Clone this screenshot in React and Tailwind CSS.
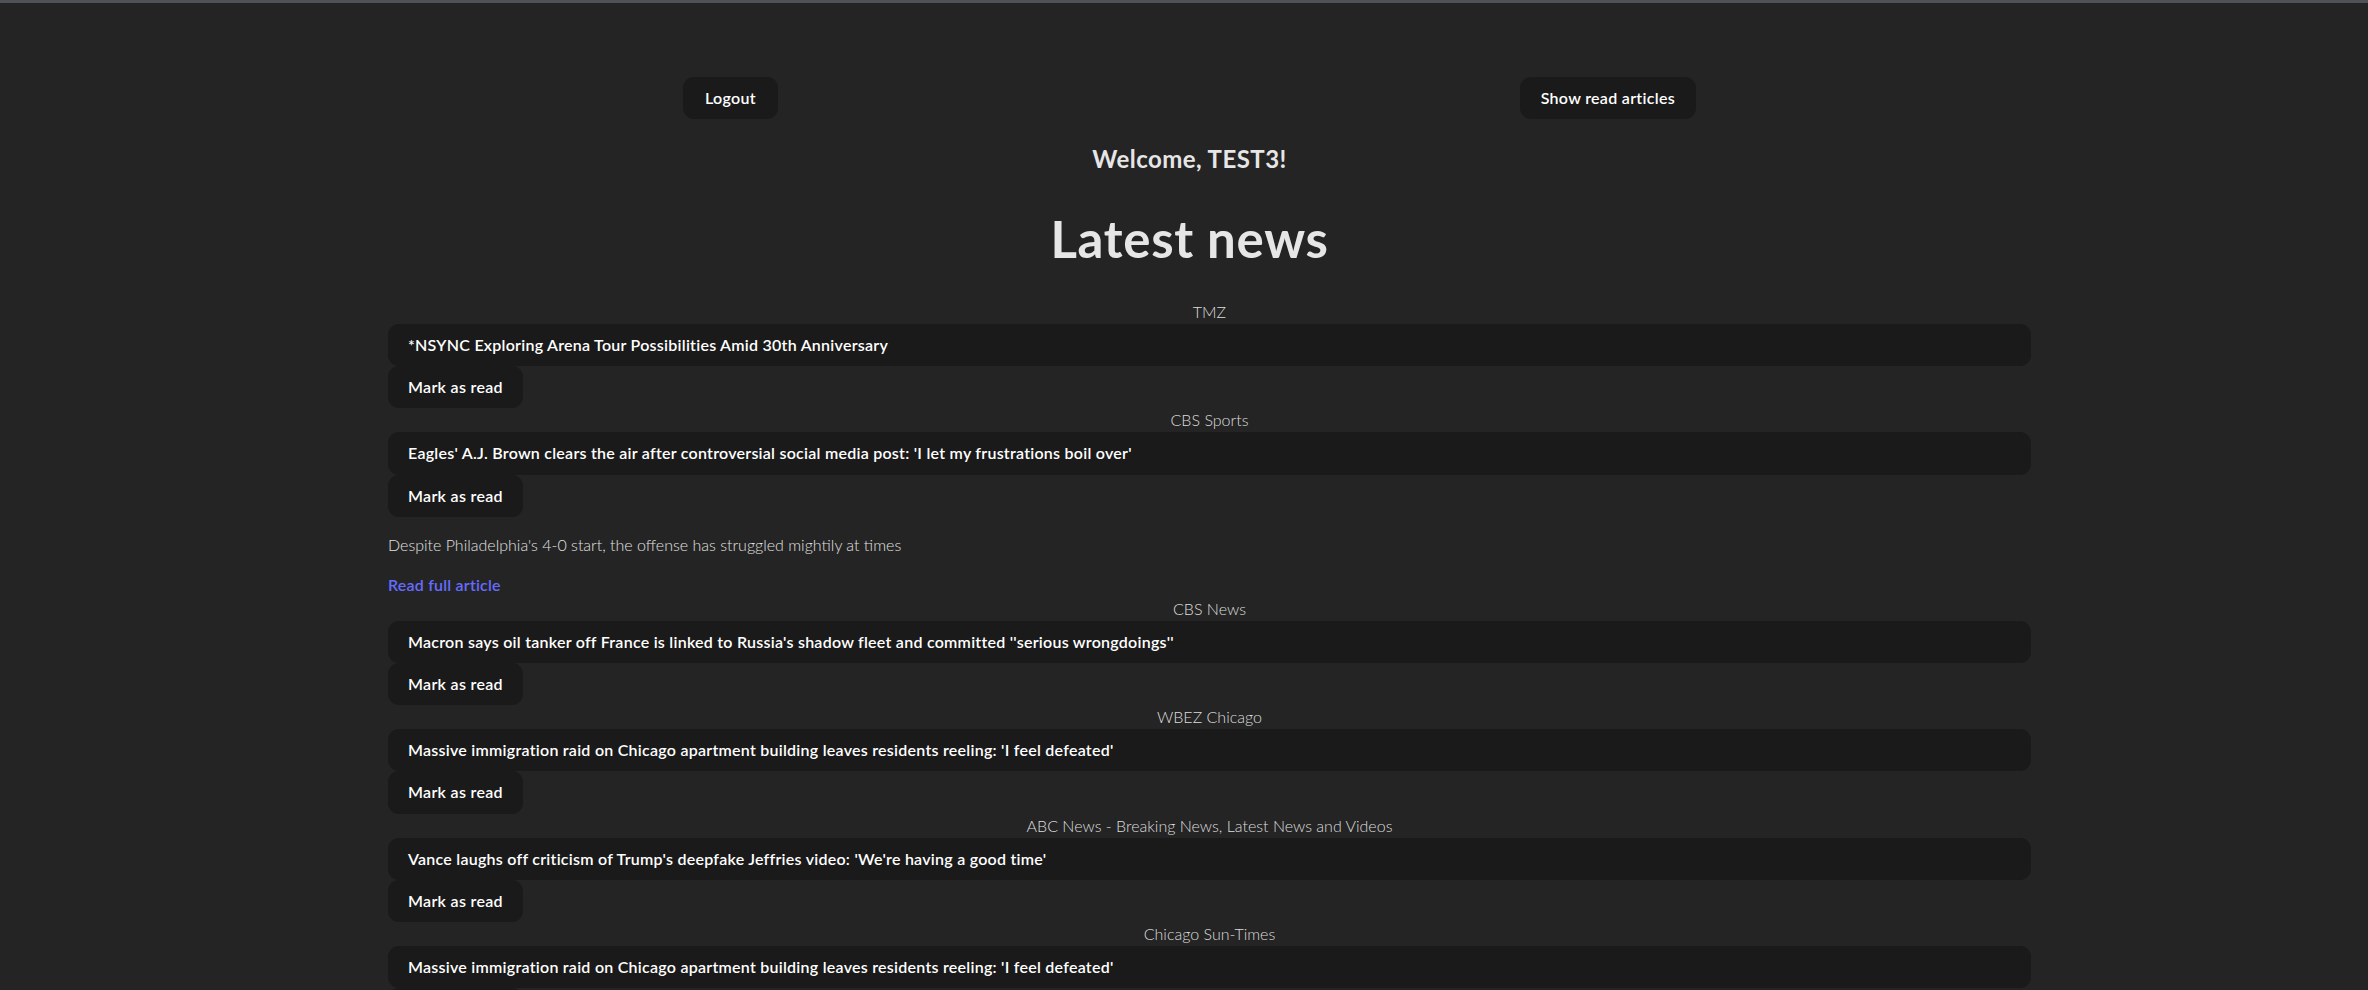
import React from 'react';

const articles = [
  {
    source: 'TMZ',
    title: '*NSYNC Exploring Arena Tour Possibilities Amid 30th Anniversary',
  },
  {
    source: 'CBS Sports',
    title: "Eagles' A.J. Brown clears the air after controversial social media post: 'I let my frustrations boil over'",
    description: "Despite Philadelphia's 4-0 start, the offense has struggled mightily at times",
  },
  {
    source: 'CBS News',
    title: "Macron says oil tanker off France is linked to Russia's shadow fleet and committed ''serious wrongdoings''",
  },
  {
    source: 'WBEZ Chicago',
    title: "Massive immigration raid on Chicago apartment building leaves residents reeling: 'I feel defeated'",
  },
  {
    source: 'ABC News - Breaking News, Latest News and Videos',
    title: "Vance laughs off criticism of Trump's deepfake Jeffries video: 'We're having a good time'",
  },
  {
    source: 'Chicago Sun-Times',
    title: "Massive immigration raid on Chicago apartment building leaves residents reeling: 'I feel defeated'",
  },
];

function DarkButton({ children, className = 'px-[20px]' }) {
  return (
    <button className={`h-[42.2px] rounded-[11px] bg-[#1a1a1a] text-[16px] leading-[24px] font-semibold tracking-[0.3px] text-white ${className}`}>
      {children}
    </button>
  );
}

function Article({ article }) {
  return (
    <div>
      <div className="text-center text-[16px] leading-[24px] font-light text-[#dcdcdc]">{article.source}</div>
      <div className="flex h-[42.2px] items-center rounded-[11px] bg-[#1a1a1a] px-[20px] text-[16px] font-semibold tracking-[0.25px] text-white">
        {article.title}
      </div>
      <DarkButton>Mark as read</DarkButton>
      {article.description && (
        <>
          <p className="my-[16px] text-[16px] leading-[24px] font-light text-[#e0e0e0]">{article.description}</p>
          <a className="block text-[16px] leading-[24px] font-semibold tracking-[0.2px] text-[#646cff]" href="#">
            Read full article
          </a>
        </>
      )}
    </div>
  );
}

export default function App() {
  return (
    <div className="min-h-screen overflow-hidden bg-[#242424] font-['Lato',sans-serif] text-[#dcdcdc]">
      <div className="h-[3px] bg-[#505256]" />

      <div className="ml-[683px] w-[1013px]">
        <div className="mt-[74px] flex justify-between">
          <DarkButton className="h-[42px] px-[22px]">Logout</DarkButton>
          <DarkButton className="h-[42px] px-[21px]">Show read articles</DarkButton>
        </div>
        <h2 className="mt-[22px] text-center text-[24px] leading-[36px] font-bold tracking-[0.45px] text-[#e6e6e6]">
          Welcome, TEST3!
        </h2>
        <h1 className="mt-[34px] text-center text-[51px] leading-[56px] font-bold tracking-[0.7px] text-[#e6e6e6]">
          Latest news
        </h1>
      </div>

      <div className="mt-[33px] ml-[388px] w-[1643px]">
        {articles.map((a, i) => (
          <Article key={i} article={a} />
        ))}
      </div>
    </div>
  );
}
